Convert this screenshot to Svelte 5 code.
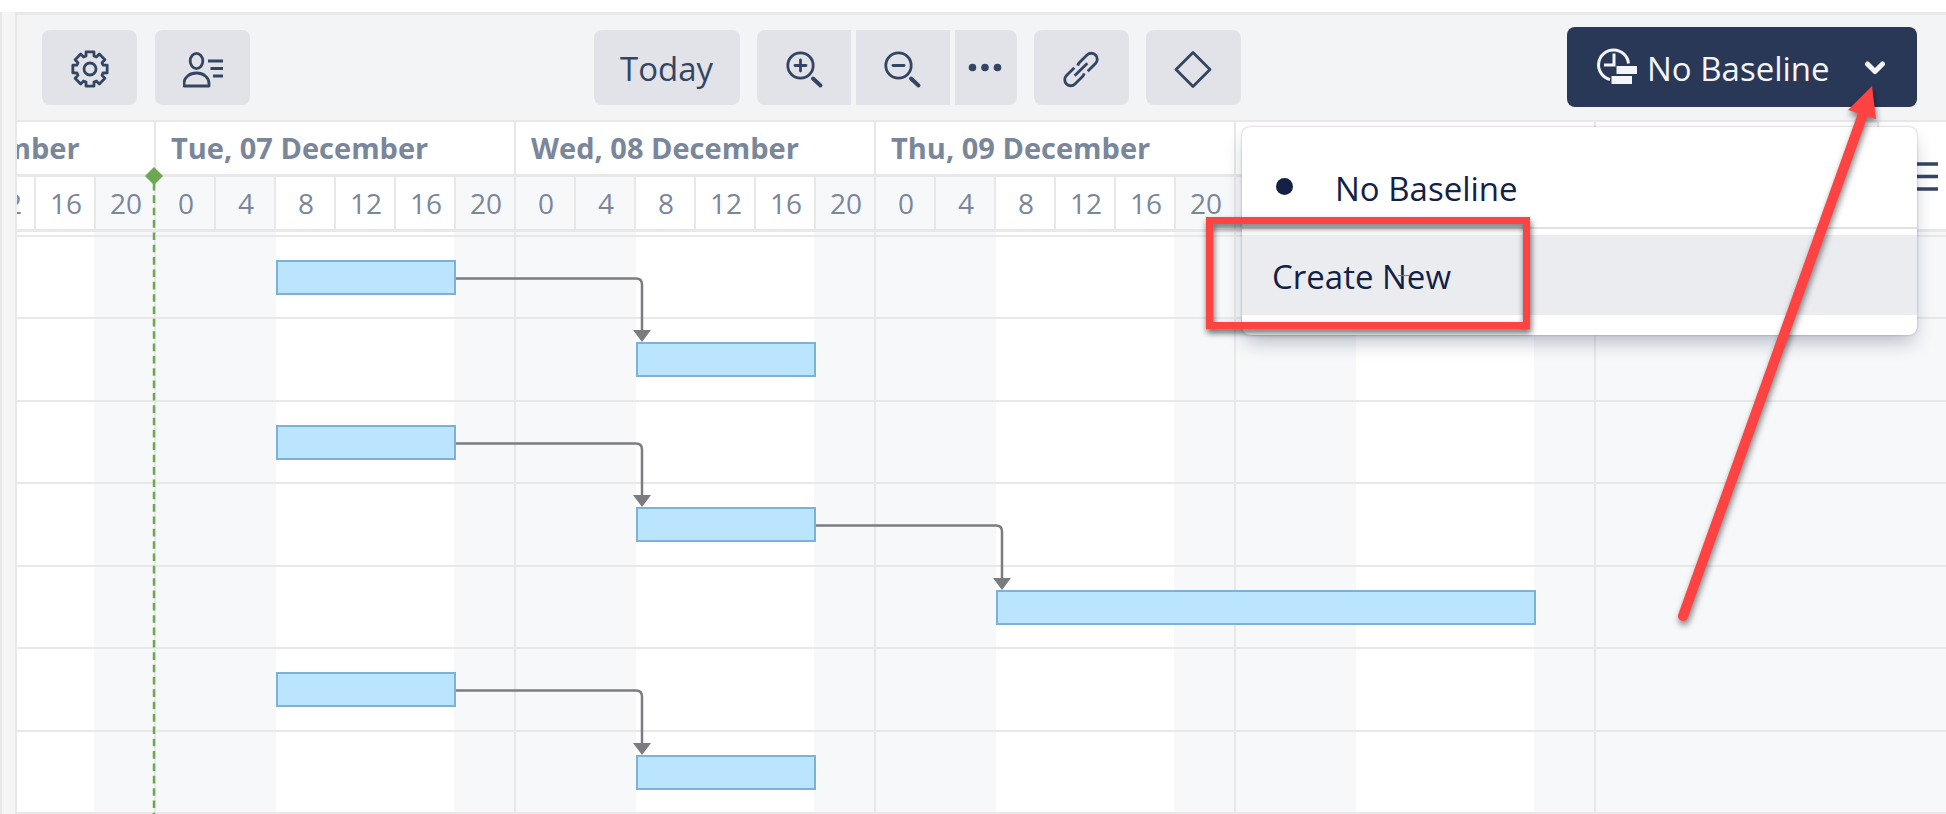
<script lang="ts">
  // horizontal scale: 15px per hour, the first day on the axis is Mon 06
  const HOUR = 15;
  const hours = [0, 4, 8, 12, 16, 20];

  const days = [
    { label: 'Mon, 06 December', ticks: true },
    { label: 'Tue, 07 December', ticks: true },
    { label: 'Wed, 08 December', ticks: true },
    { label: 'Thu, 09 December', ticks: true },
    { label: '', ticks: false },
    { label: '', ticks: false, off: true },
  ];

  // start / end in hours from the first midnight
  const tasks = [
    { id: 1, start: 32, end: 44 },
    { id: 2, start: 56, end: 68 },
    { id: 3, start: 32, end: 44 },
    { id: 4, start: 56, end: 68 },
    { id: 5, start: 80, end: 116 },
    { id: 6, start: 32, end: 44 },
    { id: 7, start: 56, end: 68 },
  ];
  const links = [[0, 1], [2, 3], [3, 4], [5, 6]];

  // rows alternate 83 / 82 px
  function barTop(row: number): number {
    return 28 + Math.floor(row / 2) * 165 + (row % 2) * 82;
  }

  function linkPath([from, to]: number[]): string {
    const x1 = tasks[from].end * HOUR;
    const x2 = tasks[to].start * HOUR + 6;
    const y1 = barTop(from) + 18.5;
    return `M${x1} ${y1}H${x2 - 6}q6 0 6 6V${barTop(to) - 12}`;
  }

  function linkHead([, to]: number[]): string {
    const x = tasks[to].start * HOUR + 6;
    const y = barTop(to) - 12;
    return `M${x - 9} ${y}h18l-9 12z`;
  }

  function gearPath(): string {
    const pts: string[] = [];
    for (let i = 0; i < 8; i++) {
      for (const [r, d] of [[13.6, -17], [17.6, -13], [17.6, 13], [13.6, 17]]) {
        const a = ((i * 45 + d) * Math.PI) / 180;
        pts.push(`${(20 + r * Math.sin(a)).toFixed(2)} ${(20 - r * Math.cos(a)).toFixed(2)}`);
      }
    }
    return 'M' + pts.join('L') + 'z';
  }
</script>

<div class="page">
  <div class="splitter"></div>
  <main class="gantt">
    <header class="toolbar">
      <div class="tools">
        <button class="tool" aria-label="Settings">
          <svg class="icon" viewBox="0 0 40 40"><path d={gearPath()} /><circle cx="20" cy="20" r="6" /></svg>
        </button>
        <button class="tool" aria-label="Resources">
          <svg class="icon" viewBox="0 0 40 40">
            <ellipse cx="13.5" cy="12" rx="6.3" ry="7.6" />
            <path d="M1 37v-2.500c0-6 5.500-10.500 12.500-10.500S26 28.500 26 34.500V37z" />
            <path d="M25 12h15M27.500 19.500H40M30 27h10" stroke-width="3" />
          </svg>
        </button>
      </div>

      <div class="tools center">
        <button class="tool today">Today</button>
        <div class="joined">
          <button class="tool" aria-label="Zoom in">
            <svg class="icon round" viewBox="0 0 40 40">
              <circle cx="16.500" cy="16.500" r="12.700" />
              <path d="M11 16.500h11M16.500 11v11" />
              <path class="handle" d="M29 29.500l7.500 7" />
            </svg>
          </button>
          <button class="tool" aria-label="Zoom out">
            <svg class="icon round" viewBox="0 0 40 40">
              <circle cx="15.500" cy="16.500" r="12.700" />
              <path d="M10 16.500h11" />
              <path class="handle" d="M28 29.500l7.500 7" />
            </svg>
          </button>
          <button class="tool more" aria-label="More zoom levels">
            <svg class="icon dots" viewBox="0 0 40 40">
              <circle cx="6.500" cy="18.500" r="3.800" /><circle cx="19" cy="18.500" r="3.800" /><circle cx="31.500" cy="18.500" r="3.800" />
            </svg>
          </button>
        </div>
        <button class="tool" aria-label="Link tasks">
          <svg class="icon" viewBox="0 0 40 40">
            <g transform="rotate(-45 20 20.500)">
              <path d="M16.500 14.500H5.500a6 6 0 0 0 0 12h11a6 6 0 0 0 3-1M23.500 26.500h11a6 6 0 0 0 0-12h-11a6 6 0 0 0-3 1M11 20.500h18" />
            </g>
          </svg>
        </button>
        <button class="tool" aria-label="Milestone">
          <svg class="icon" viewBox="0 0 40 40"><path d="M20 3.500L37 20.500 20 37.500 3 20.500z" /></svg>
        </button>
      </div>

      <div class="baseline">
        <button class="baseline-button" aria-haspopup="menu" aria-expanded="true">
          <svg class="clock" viewBox="0 0 42 40">
            <path d="M14 31.500A15 15 0 1 1 32.500 15.500" />
            <path d="M18 5.500v11.500H8" />
            <path class="solid" d="M20.500 18H41v8H20.500zM15.500 28H36v8H15.500z" />
          </svg>
          <span>No Baseline</span>
          <svg class="chevron" viewBox="0 0 22 16"><path d="M3.500 4L11 11.500 18.500 4" /></svg>
        </button>

        <div class="menu" role="menu">
          <button class="item checked" role="menuitem"><span class="bullet"></span>No Baseline</button>
          <hr />
          <button class="item active" role="menuitem">Create New</button>
          <div class="callout"></div>
          <div class="tick"></div>
        </div>

        <svg class="arrow" viewBox="0 0 220 560">
          <path class="shaft" d="M16 540L196 38" />
          <path class="head" d="M205 10l4 33-28-9z" />
        </svg>
      </div>
    </header>

    <section class="chart">
      <div class="timeline">
        <div class="scale">
          {#each days as day, i (i)}
            <div class="day">
              <div class="day-label">{day.label}</div>
              <div class="hours">
                {#each hours as h (h)}
                  <div class="hour" class:off={day.off || h < 8 || h === 20}>{day.ticks ? h : ''}</div>
                {/each}
              </div>
            </div>
          {/each}
        </div>

        <div class="body">
          <div class="stripes">
            {#each days as day, i (i)}
              <div class="stripe" class:weekend={day.off}></div>
            {/each}
          </div>
          <div class="gap-row"></div>
          {#each tasks as task (task.id)}
            <div class="row">
              <div class="bar" style="left: {task.start * HOUR}px; width: {(task.end - task.start) * HOUR}px"></div>
            </div>
          {/each}
          <svg class="links">
            {#each links as link}
              <path class="line" d={linkPath(link)} />
              <path class="tip" d={linkHead(link)} />
            {/each}
          </svg>
        </div>

        <svg class="now">
          <path class="now-line" d="M10 16V680" />
          <path class="now-mark" d="M10 0l9 9-9 9-9-9z" />
        </svg>
      </div>

      <button class="columns" aria-label="Columns">
        <svg viewBox="0 0 50 30"><path d="M0 3h50M0 15.500h50M0 28h50" /></svg>
      </button>
    </section>
  </main>
</div>

<style>
  :global(body) {
    margin: 0;
    overflow: hidden;
    background: #fff;
  }
  .page {
    --line: #e8e8e8;
    --off: #f7f8fa;
    --ink: #344563;
    --muted: #7a869a;
    --red: #ff4343;
    display: flex;
    box-sizing: border-box;
    height: 100vh;
    padding-top: 12px;
    overflow: hidden;
    font-family: "Segoe UI", "Open Sans", "Noto Sans", sans-serif;
    font-size: 33px;
    color: var(--ink);
  }
  .splitter {
    flex: none;
    width: 13px;
    background: #f5f5f5;
    border: solid var(--line);
    border-width: 0 2px;
  }
  .gantt {
    flex: 1;
    min-width: 0;
    border-top: 3px solid var(--line);
  }
  button {
    margin: 0;
    padding: 0;
    border: 0;
    font: inherit;
    color: inherit;
    cursor: pointer;
  }

  /* toolbar */
  .toolbar {
    display: flex;
    justify-content: space-between;
    padding: 12px 29px 13px 25px;
    background: #f3f4f6;
    border-bottom: 2px solid var(--line);
  }
  .tools {
    display: flex;
    gap: 18px;
    padding-top: 3px;
  }
  .center {
    gap: 17px;
    padding-left: 17px;
  }
  .joined {
    display: flex;
    gap: 5px;
  }
  .tool {
    display: flex;
    align-items: center;
    justify-content: center;
    width: 95px;
    height: 75px;
    padding-top: 2px;
    background: #e2e3e8;
    border-radius: 8px;
  }
  .today { width: 146px; }
  .joined .tool {
    width: 94px;
    border-radius: 0;
  }
  .joined .tool:first-child { border-radius: 8px 0 0 8px; }
  .joined .more {
    width: 62px;
    border-radius: 0 8px 8px 0;
  }
  .icon {
    width: 40px;
    height: 40px;
    fill: none;
    stroke: var(--ink);
    stroke-width: 2.8;
    stroke-linejoin: round;
  }
  .round { stroke-linecap: round; }
  .handle { stroke-width: 4; }
  .dots {
    fill: var(--ink);
    stroke: none;
  }

  /* baseline drop-down */
  .baseline {
    position: relative;
    width: 350px;
  }
  .baseline-button {
    display: flex;
    align-items: center;
    width: 100%;
    height: 80px;
    padding: 2px 31px 0 29px;
    background: #2a3857;
    border-radius: 8px;
    color: #f4f5f7;
  }
  .baseline-button span {
    flex: 1;
    padding-left: 9px;
    text-align: left;
  }
  .clock {
    width: 42px;
    height: 40px;
    fill: none;
    stroke: #f4f5f7;
    stroke-width: 3;
  }
  .clock .solid {
    fill: #f4f5f7;
    stroke: none;
  }
  .chevron {
    width: 22px;
    height: 16px;
    fill: none;
    stroke: #f4f5f7;
    stroke-width: 5;
    stroke-linecap: round;
    stroke-linejoin: round;
  }
  .menu {
    position: absolute;
    z-index: 2;
    top: 100px;
    right: 0;
    box-sizing: border-box;
    width: 675px;
    padding: 20px 0;
    background: #fff;
    border-radius: 8px;
    box-shadow: 0 0 2px rgba(9, 30, 66, 0.35), 0 10px 20px -4px rgba(9, 30, 66, 0.3);
  }
  .item {
    display: flex;
    align-items: center;
    gap: 42px;
    width: 100%;
    height: 80px;
    padding: 2px 30px 0;
    background: #fff;
    color: #132144;
    text-align: left;
  }
  .item.active { background: #ebecf0; }
  .bullet {
    width: 17px;
    height: 17px;
    margin: 0 0 4px 4px;
    border-radius: 50%;
    background: #132144;
  }
  hr {
    height: 2px;
    margin: 0 0 6px;
    border: 0;
    background: #dfe1e6;
  }
  .callout {
    position: absolute;
    top: 90px;
    left: -36px;
    box-sizing: border-box;
    width: 324px;
    height: 112px;
    border: 7px solid var(--red);
    filter: drop-shadow(1px 4px 3px rgba(0, 0, 0, 0.6));
  }
  .tick {
    position: absolute;
    top: 148px;
    left: 156px;
    width: 11px;
    height: 1px;
    background: var(--red);
  }
  .arrow {
    position: absolute;
    z-index: 3;
    top: 49px;
    right: 30px;
    width: 220px;
    height: 560px;
    filter: drop-shadow(1px 4px 3px rgba(0, 0, 0, 0.5));
    pointer-events: none;
  }
  .shaft {
    fill: none;
    stroke: var(--red);
    stroke-width: 10;
    stroke-linecap: round;
  }
  .head { fill: var(--red); }

  /* chart */
  .chart {
    position: relative;
    overflow: hidden;
  }
  .timeline {
    position: relative;
    width: 2160px;
    margin-left: -221px;
  }
  .scale {
    display: flex;
    font-size: 28px;
    color: var(--muted);
  }
  .day { width: 360px; }
  .day-label {
    box-sizing: border-box;
    height: 55px;
    padding-left: 15px;
    border-right: 2px solid var(--line);
    border-bottom: 3px solid var(--line);
    font-size: 29px;
    font-weight: 700;
    line-height: 52px;
    white-space: nowrap;
  }
  .hours {
    display: grid;
    grid-template-columns: repeat(6, 1fr);
    border-bottom: 3px solid var(--line);
  }
  .hour {
    height: 52px;
    padding-left: 2px;
    border-right: 2px solid var(--line);
    line-height: 52px;
    text-align: center;
  }
  .hour.off { background: var(--off); }
  .body { position: relative; }
  .stripes {
    position: absolute;
    inset: 0;
    display: flex;
  }
  .stripe {
    box-sizing: border-box;
    width: 360px;
    border-right: 2px solid var(--line);
    background: linear-gradient(90deg, var(--off) 120px, #fff 120px 298px, var(--off) 298px);
  }
  .stripe.weekend { background: var(--off); }
  .gap-row {
    position: relative;
    height: 3px;
    border-bottom: 2px solid var(--line);
  }
  .row {
    position: relative;
    box-sizing: border-box;
    height: 82px;
    border-bottom: 2px solid var(--line);
  }
  .row:nth-child(even) { height: 83px; }
  .bar {
    position: absolute;
    top: 23px;
    box-sizing: border-box;
    height: 35px;
    background: #bbe4ff;
    border: 2px solid #7cb2d8;
  }
  .links {
    position: absolute;
    inset: 0;
    width: 100%;
    height: 100%;
  }
  .line {
    fill: none;
    stroke: #7b7c80;
    stroke-width: 2.5;
  }
  .tip { fill: #7b7c80; }
  .now {
    position: absolute;
    top: 45px;
    left: 348px;
    width: 20px;
    height: 680px;
  }
  .now-line {
    stroke: #6ba84f;
    stroke-width: 2.5;
    stroke-dasharray: 7.6 4.75;
  }
  .now-mark { fill: #6ba84f; }
  .columns {
    position: absolute;
    top: 0;
    right: 0;
    display: flex;
    align-items: center;
    box-sizing: border-box;
    width: 69px;
    height: 107px;
    padding-left: 9px;
    background: #fff;
    border-left: 2px solid var(--line);
  }
  .columns svg {
    width: 50px;
    height: 30px;
    stroke: var(--ink);
    stroke-width: 3.5;
  }
</style>
